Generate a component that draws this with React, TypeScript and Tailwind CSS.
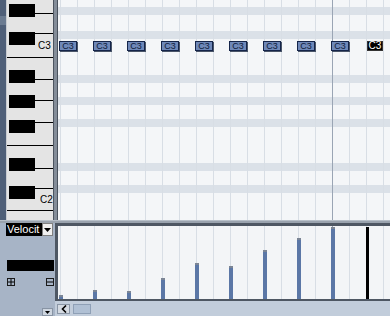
const LINES = Array.from({ length: 20 }, (_, k) => k)
const NOTE_COUNT = 10
const VELOCITIES = [4, 9, 8, 21, 36, 33, 49, 61, 72, 72]

type Row = { h: number; band?: boolean; notes?: boolean }

const GRID_ROWS: Row[] = [
  { h: 7 },
  { h: 8, band: true },
  { h: 16 },
  { h: 8, band: true },
  { h: 36, notes: true },
  { h: 8, band: true },
  { h: 14 },
  { h: 8, band: true },
  { h: 14 },
  { h: 8, band: true },
  { h: 36 },
  { h: 8, band: true },
  { h: 14 },
  { h: 8, band: true },
  { h: 27 },
]

// black keys: top, bottom, y of the key boundary line to the right
const BLACK_KEYS = [
  [4, 17, 13],
  [32, 45, 33],
  [70, 83, 79],
  [95, 108, 100],
  [120, 133, 122],
  [158, 171, 168],
  [186, 199, 188],
]
const WHITE_LINES = [57, 145, 210]

function GridLines() {
  return (
    <div className="absolute inset-0 flex pl-[2px] pointer-events-none">
      {LINES.map((k) => (
        <div
          key={k}
          className={`w-[17px] shrink-0 border-l ${k === 16 ? 'border-[#9aa5b4]' : 'border-[#d8dee5]'}`}
        />
      ))}
    </div>
  )
}

function Keyboard() {
  return (
    <div className="relative w-[46px] h-full bg-[#e4e4e4]">
      <svg width="46" height="220" className="block">
        {BLACK_KEYS.map(([t, b, l]) => (
          <g key={t}>
            <rect x="2" y={t} width="26" height={b - t} fill="#000" />
            <rect x="28" y={l} width="18" height="1" fill="#000" />
          </g>
        ))}
        {WHITE_LINES.map((y) => (
          <rect key={y} x="0" y={y} width="46" height="1" fill="#000" />
        ))}
      </svg>
      <span className="absolute left-[31px] top-[41px] text-[10px] leading-none text-black">C3</span>
      <span className="absolute left-[33px] top-[195px] text-[10px] leading-none text-black">C2</span>
    </div>
  )
}

export default function App() {
  return (
    <div className="w-[390px] h-[316px] overflow-hidden flex flex-col bg-[#c4cfdc] font-['Liberation_Sans',Arial,sans-serif]">
      {/* note area */}
      <div className="flex h-[220px]">
        <div className="w-[6px] bg-[#4f5f78] flex flex-col">
          <div className="mt-[16px] h-[9px] bg-[#6b7b91]" />
        </div>
        <div className="w-[1px] bg-[#c9ccd1]" />
        <Keyboard />
        <div className="w-[5px] flex">
          <div className="w-[1px] bg-[#4d5560]" />
          <div className="w-[3px] bg-[#848d99]" />
          <div className="w-[1px] bg-[#4a525d]" />
        </div>
        <div className="relative flex-1 flex flex-col bg-[#f4f6f8]">
          {GRID_ROWS.map((r, i) => (
            <div
              key={i}
              className={`shrink-0 ${r.band ? 'bg-[#dbe1e8]' : ''}`}
              style={{ height: r.h }}
            >
              {r.notes && (
                <div className="relative z-10 flex gap-[16px] pl-[1px] pt-[2px]">
                  {Array.from({ length: NOTE_COUNT }, (_, i) =>
                    i === NOTE_COUNT - 1 ? (
                      <div
                        key={i}
                        className="ml-[2px] w-[16px] h-[10px] bg-black border border-[#333] flex items-center justify-center text-[10px] leading-none text-white"
                      >
                        C3
                      </div>
                    ) : (
                      <div
                        key={i}
                        className="w-[18px] h-[10px] bg-[#6f88b8] border border-[#15254a] shadow-[1px_1px_0_#4a5568] flex items-center justify-center text-[9px] leading-none text-[#0e1c3c]"
                      >
                        C3
                      </div>
                    )
                  )}
                </div>
              )}
            </div>
          ))}
          <GridLines />
        </div>
      </div>

      {/* splitter */}
      <div className="h-[5px] bg-[#9aa3ae] border-t border-[#b8c0c9]" />

      {/* controller lane */}
      <div className="flex flex-1">
        <div className="w-[55px] flex flex-col bg-[#a7b4c6]">
          <div className="flex h-[13px] ml-[6px]">
            <div className="w-[36px] bg-black text-white text-[11px] leading-[13px] whitespace-nowrap pl-[1px]">
              Velocit
            </div>
            <div className="w-[11px] bg-[#f0f0f0] border border-[#808080] flex items-center justify-center">
              <svg width="7" height="6" viewBox="0 0 7 6">
                <path d="M0 1h7L3.5 5z" fill="#000" />
              </svg>
            </div>
          </div>
          <div className="mt-[24px] ml-[7px] w-[47px] h-[11px] bg-black" />
          <div className="mt-[7px] ml-[7px] w-[47px] flex justify-between">
            <div className="w-[8px] h-[8px] border border-[#1a1a1a] flex items-center justify-center">
              <svg width="6" height="6" viewBox="0 0 6 6">
                <path d="M3 0v6M0 3h6" stroke="#000" strokeWidth="1" />
              </svg>
            </div>
            <div className="w-[8px] h-[8px] border border-[#1a1a1a] flex items-center justify-center">
              <svg width="6" height="6" viewBox="0 0 6 6">
                <path d="M0 3h6" stroke="#000" strokeWidth="1" />
              </svg>
            </div>
          </div>
          <div className="mt-[22px] ml-[42px] w-[11px] h-[8px] bg-[#cdd5df] border border-[#8894a4] flex justify-center pt-[2px]">
            <svg width="5" height="3" viewBox="0 0 5 3">
              <path d="M0 0h5L2.5 3z" fill="#000" />
            </svg>
          </div>
        </div>

        <div className="flex-1 flex flex-col">
          <div className="h-[78px] flex border-t-[3px] border-l-[3px] border-b-2 border-[#4e5763]">
            <div className="relative flex-1 bg-[#f3f5f7]">
              <GridLines />
              <div className="relative z-10 flex items-end h-full pl-[1px] gap-[30px]">
                {VELOCITIES.map((v, i) =>
                  i === VELOCITIES.length - 1 ? (
                    <div key={i} className="w-[3px] ml-[1px] bg-black" style={{ height: v }} />
                  ) : (
                    <div
                      key={i}
                      className="w-[4px] bg-[#5b77a6] border-t-2 border-[#7b8595]"
                      style={{ height: v }}
                    />
                  )
                )}
              </div>
            </div>
          </div>
          <div className="flex-1 flex items-start pt-[3px] bg-[#c2cddb]">
            <div className="ml-[2px] w-[13px] h-[10px] bg-[#d4dae2] border border-[#8a96a6] flex items-center justify-center">
              <svg width="6" height="8" viewBox="0 0 6 8">
                <path d="M5 0.5L1.5 4L5 7.5" stroke="#000" strokeWidth="1.6" fill="none" />
              </svg>
            </div>
            <div className="ml-[3px] w-[18px] h-[10px] bg-[#b0c0d4] border border-[#8fa0b6]" />
          </div>
        </div>
      </div>
    </div>
  )
}
